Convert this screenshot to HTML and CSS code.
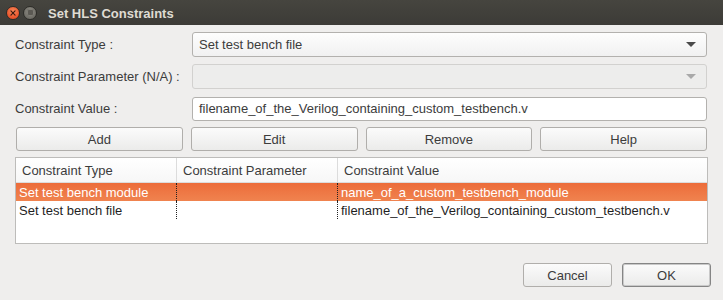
FILE: index.html
```html
<!DOCTYPE html>
<html>
<head>
<meta charset="utf-8">
<link rel="stylesheet" href="styles.css">
</head>
<body>
<div class="window">
  <div class="titlebar">
    <span class="wbtn close"><svg width="14" height="14" viewBox="0 0 14 14"><path d="M4.6 4.6 L9.4 9.4 M9.4 4.6 L4.6 9.4" stroke="#3a1a10" stroke-width="1.3" stroke-linecap="round"/></svg></span>
    <span class="wbtn minimize"><span class="inner"></span></span>
    <span class="title">Set HLS Constraints</span>
  </div>
  <div class="content">
    <div class="form">
      <label class="label">Constraint Type :</label>
      <div class="combo"><span class="combo-text">Set test bench file</span><span class="arrow"></span></div>
      <label class="label">Constraint Parameter (N/A) :</label>
      <div class="combo disabled"><span class="combo-text"></span><span class="arrow"></span></div>
      <label class="label">Constraint Value :</label>
      <div class="edit">filename_of_the_Verilog_containing_custom_testbench.v</div>
    </div>
    <div class="actions">
      <button class="btn">Add</button>
      <button class="btn">Edit</button>
      <button class="btn">Remove</button>
      <button class="btn">Help</button>
    </div>
    <div class="table">
      <div class="thead">
        <div class="th">Constraint Type</div>
        <div class="th">Constraint Parameter</div>
        <div class="th last">Constraint Value</div>
      </div>
      <div class="tr selected">
        <div class="td">Set test bench module</div>
        <div class="td"></div>
        <div class="td last">name_of_a_custom_testbench_module</div>
      </div>
      <div class="tr">
        <div class="td">Set test bench file</div>
        <div class="td"></div>
        <div class="td last">filename_of_the_Verilog_containing_custom_testbench.v</div>
      </div>
    </div>
    <div class="footer">
      <button class="btn small">Cancel</button>
      <button class="btn small default">OK</button>
    </div>
  </div>
</div>
</body>
</html>
```
FILE: styles.css
```css
html, body {
  margin: 0;
  padding: 0;
  background: #efeeed;
}
body {
  font-family: "Liberation Sans", Arial, sans-serif;
  font-size: 13px;
  color: #3c3c3c;
}
.window {
  width: 723px;
  height: 300px;
  background: #efeeed;
  overflow: hidden;
}
.titlebar {
  height: 25px;
  background: linear-gradient(#46453f, #3c3b37);
  display: flex;
  align-items: center;
  padding-left: 6px;
  box-sizing: border-box;
}
.wbtn {
  width: 14px;
  height: 14px;
  border-radius: 50%;
  display: flex;
  align-items: center;
  justify-content: center;
  box-sizing: border-box;
}
.close {
  background: radial-gradient(circle at 50% 35%, #f7885a, #e9532a 70%);
  border: 1px solid #2d2c28;
}
.minimize {
  margin-left: 3px;
  background: radial-gradient(circle at 50% 35%, #8d8b83, #6f6d66 70%);
  border: 1px solid #2d2c28;
}
.minimize .inner {
  width: 7px;
  height: 7px;
  border-radius: 2px;
  background: #5b5953;
  box-shadow: inset 0 0 0 1px #7d7b74;
}
.title {
  margin-left: 11px;
  font-weight: bold;
  font-size: 13px;
  color: #dfdbd2;
  margin-top: 1px;
}
.content {
  padding: 7px 16px 0 15px;
}
.form {
  display: grid;
  grid-template-columns: 177px 515px;
  grid-template-rows: 25px 25px 24px;
  row-gap: 7px;
  align-items: center;
}
.label {
  color: #3c3c3c;
}
.combo {
  height: 25px;
  box-sizing: border-box;
  border: 1px solid #b3b1ae;
  border-radius: 3px;
  background: linear-gradient(#fdfdfd, #f1f1f1);
  display: flex;
  align-items: center;
  padding: 0 9px 0 6px;
  color: #3c3c3c;
}
.combo-text {
  flex: 1;
}
.arrow {
  width: 0;
  height: 0;
  border-left: 5px solid transparent;
  border-right: 5px solid transparent;
  border-top: 5px solid #4a4a4a;
  margin-right: 1px;
}
.combo.disabled {
  border-color: #d2d1cf;
  background: #ededec;
}
.combo.disabled .arrow {
  border-top-color: #a9a9a9;
}
.edit {
  height: 24px;
  margin-top: 1px;
  box-sizing: border-box;
  border: 1px solid #b3b1ae;
  border-radius: 3px;
  background: #fff;
  display: flex;
  align-items: center;
  padding-left: 6px;
  color: #3c3c3c;
}
.actions {
  display: grid;
  grid-template-columns: repeat(4, 1fr);
  column-gap: 8px;
  margin: 7px 0 0 1px;
}
.btn {
  font-family: inherit;
  font-size: 13px;
  color: #3c3c3c;
  height: 24px;
  box-sizing: border-box;
  border: 1px solid #b0aeab;
  border-radius: 3px;
  background: linear-gradient(#fbfbfb, #ebebea);
  padding: 0;
}
.table {
  margin-top: 6px;
  width: 693px;
  height: 87px;
  box-sizing: border-box;
  border: 1px solid #bdbcba;
  background: #fff;
}
.thead {
  display: grid;
  grid-template-columns: 161px 161px 1fr;
  height: 25px;
  box-sizing: border-box;
  border-bottom: 1px solid #dcdcdc;
  background: linear-gradient(#ffffff, #f7f7f7);
}
.th {
  display: flex;
  align-items: center;
  padding-left: 6px;
  border-right: 1px solid #dcdcdc;
  color: #3c3c3c;
}
.th.last {
  border-right: none;
}
.tr {
  display: grid;
  grid-template-columns: 161px 161px 1fr;
  height: 18px;
}
.tr.selected {
  background: linear-gradient(#ec6c3a, #f0834f);
  color: #fff;
}
.td {
  display: flex;
  align-items: center;
  padding-left: 3px;
  border-right: 1px dotted #222;
  color: inherit;
  white-space: nowrap;
}
.tr:not(.selected) .td {
  color: #1f1f1f;
}
.td.last {
  border-right: none;
}
.footer {
  display: flex;
  justify-content: flex-end;
  gap: 10px;
  margin-top: 19px;
  margin-right: -4px;
}
.btn.small {
  width: 89px;
}
.btn.default {
  border: 1px solid #858585;
  box-shadow: inset 0 0 0 1px #c9c9c9;
}
```
